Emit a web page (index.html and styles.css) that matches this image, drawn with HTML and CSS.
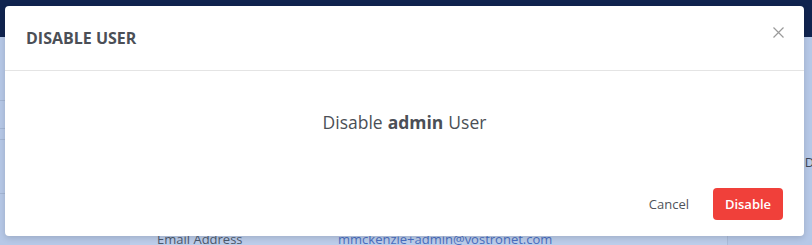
FILE: index.html
```html
<!DOCTYPE html>
<html lang="en">
<head>
  <meta charset="UTF-8">
  <meta name="viewport" content="width=device-width, initial-scale=1">
  <title>Disable User</title>
  <link rel="stylesheet" href="styles.css">
</head>
<body>

<div class="page">
  <div class="topbar"></div>
  <div class="page-main">
    <div class="side-list">
      <div class="side-row"></div>
      <div class="side-row"></div>
      <div class="side-row"></div>
      <div class="side-row"></div>
    </div>
    <div class="user-card">
      <div class="detail-row">
        <span class="detail-label">Email Address</span>
        <a class="detail-value" href="#">mmckenzie+admin@vostronet.com</a>
      </div>
    </div>
    <div class="right-col">
      <span class="right-text">Do</span>
    </div>
  </div>
</div>

<div class="modal">
  <div class="modal-header">
    <h4 class="modal-title">DISABLE USER</h4>
    <button class="close-button" type="button">
      <svg width="11" height="11" viewBox="0 0 11 11"><path d="M0.5 0.5 L10.5 10.5 M10.5 0.5 L0.5 10.5" stroke="#9a9a9a" stroke-width="1.2" fill="none"/></svg>
    </button>
  </div>
  <div class="modal-body">
    Disable <strong>admin</strong> User
  </div>
  <div class="modal-footer">
    <button class="cancel-button" type="button">Cancel</button>
    <button class="disable-button" type="button">Disable</button>
  </div>
</div>

</body>
</html>
```

FILE: styles.css
```css
body {
  margin: 0;
  font-family: "Open Sans", "Noto Sans", sans-serif;
  background-color: #b6c8e7;
  width: 812px;
  height: 245px;
  overflow: hidden;
  position: relative;
}

.page {
  display: flex;
  flex-direction: column;
  height: 245px;
}

.topbar {
  height: 37px;
  background-color: #10244f;
}

.page-main {
  flex: 1;
  display: flex;
}

.side-list {
  width: 130px;
  padding-top: 63px;
}

.side-row {
  height: 27px;
  border-top: 1px solid #a4b6d4;
}

.side-row:nth-child(2) {
  height: 10px;
}

.side-row:nth-child(3) {
  height: 53px;
}

.user-card {
  width: 597px;
  background-color: #bccdea;
  display: flex;
  flex-direction: column;
  justify-content: flex-end;
}

.detail-row {
  display: flex;
  padding-left: 27px;
  font-size: 13px;
  height: 16px;
  line-height: 20px;
}

.detail-label {
  width: 181px;
  color: #4d5a6e;
}

.detail-value {
  color: #4a6fc2;
  text-decoration: none;
}

.right-col {
  flex: 1;
  border-left: 1px solid #aabbd8;
  padding-top: 113px;
  text-align: right;
  overflow: hidden;
}

.right-text {
  font-size: 13px;
  color: #3d4658;
  margin-right: -10px;
}

.modal {
  position: absolute;
  left: 5px;
  top: 6px;
  width: 799px;
  height: 230px;
  background: #fff;
  border-radius: 4px;
  box-shadow: 0 2px 6px rgba(0, 0, 0, 0.15);
  display: flex;
  flex-direction: column;
}

.modal-header {
  height: 64px;
  border-bottom: 1px solid #e4e4e4;
  display: flex;
  align-items: center;
  justify-content: space-between;
  padding: 0 20px 0 21px;
}

.modal-title {
  margin: 0;
  font-size: 16px;
  font-weight: 700;
  color: #4b4f56;
}

.close-button {
  background: none;
  border: none;
  padding: 0;
  margin-top: -12px;
  cursor: pointer;
  display: flex;
}

.modal-body {
  height: 101px;
  display: flex;
  align-items: center;
  justify-content: center;
  font-size: 17.5px;
  color: #4b4f56;
}

.modal-body strong {
  font-weight: 700;
  margin: 0 5px;
}

.modal-footer {
  display: flex;
  justify-content: flex-end;
  align-items: center;
  gap: 12px;
  padding: 0 21px;
  height: 64px;
}

.cancel-button {
  background: none;
  border: none;
  font-family: inherit;
  font-size: 13px;
  color: #4f535a;
  padding: 8px 12px;
  cursor: pointer;
}

.disable-button {
  width: 70px;
  height: 32px;
  background-color: #f0403a;
  color: #fff;
  border: none;
  border-radius: 4px;
  font-family: inherit;
  font-size: 13px;
  font-weight: 600;
  cursor: pointer;
}
```
